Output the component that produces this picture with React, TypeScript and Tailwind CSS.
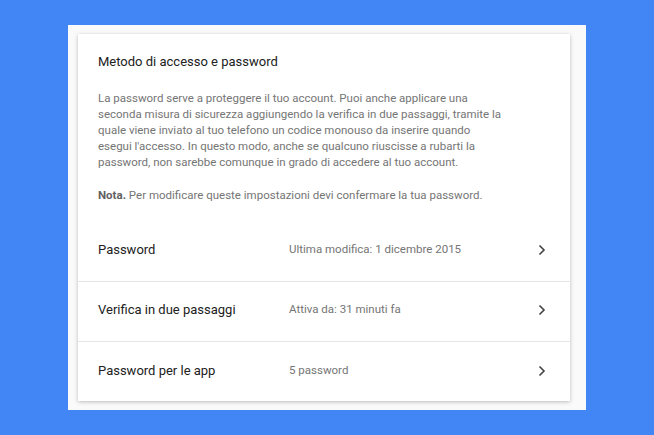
import React from "react";

function Chevron() {
  return (
    <svg width="8" height="12" viewBox="0 0 8 12" className="shrink-0">
      <path d="M1.5 1.5 L6 6 L1.5 10.5" fill="none" stroke="#424242" strokeWidth="1.6" />
    </svg>
  );
}

function Row({ label, value, last }: { label: string; value: string; last?: boolean }) {
  return (
    <div className={`flex items-center h-[60px] pl-[20px] pr-[24px] pb-[3px] ${last ? "" : "border-b border-[#e5e5e5]"}`}>
      <div className="w-[191px] text-[13px] text-[#212121]">{label}</div>
      <div className="flex-1 text-[11.5px] text-[#757575]">{value}</div>
      <Chevron />
    </div>
  );
}

export default function App() {
  return (
    <div className="w-[654px] h-[435px] bg-[#4285f4] pt-[25px] pl-[68px]" style={{ fontFamily: "Roboto, 'Liberation Sans', sans-serif" }}>
      <div className="w-[518px] h-[385px] bg-[#fafafa] pt-[9px] pl-[10px]">
        <div className="w-[492px] h-[367px] bg-white shadow-[0_1px_4px_rgba(0,0,0,0.25)] flex flex-col overflow-hidden">
          <div className="pl-[20px] pr-[20px] pt-[19px]">
            <div className="text-[13px] leading-[18px] text-[#212121]">Metodo di accesso e password</div>
            <p className="mt-[19px] w-[420px] text-[11.5px] leading-[16px] text-[#757575]">
              La password serve a proteggere il tuo account. Puoi anche applicare una
              <br />
              seconda misura di sicurezza aggiungendo la verifica in due passaggi, tramite la
              <br />
              quale viene inviato al tuo telefono un codice monouso da inserire quando
              <br />
              esegui l'accesso. In questo modo, anche se qualcuno riuscisse a rubarti la
              <br />
              password, non sarebbe comunque in grado di accedere al tuo account.
            </p>
            <p className="mt-[17px] text-[11.5px] leading-[16px] text-[#757575]">
              <span className="font-bold text-[#616161]">Nota.</span> Per modificare queste impostazioni devi confermare la tua password.
            </p>
          </div>
          <div className="mt-[19px]">
            <Row label="Password" value="Ultima modifica: 1 dicembre 2015" />
            <Row label="Verifica in due passaggi" value="Attiva da: 31 minuti fa" />
            <Row label="Password per le app" value="5 password" last />
          </div>
        </div>
      </div>
    </div>
  );
}
